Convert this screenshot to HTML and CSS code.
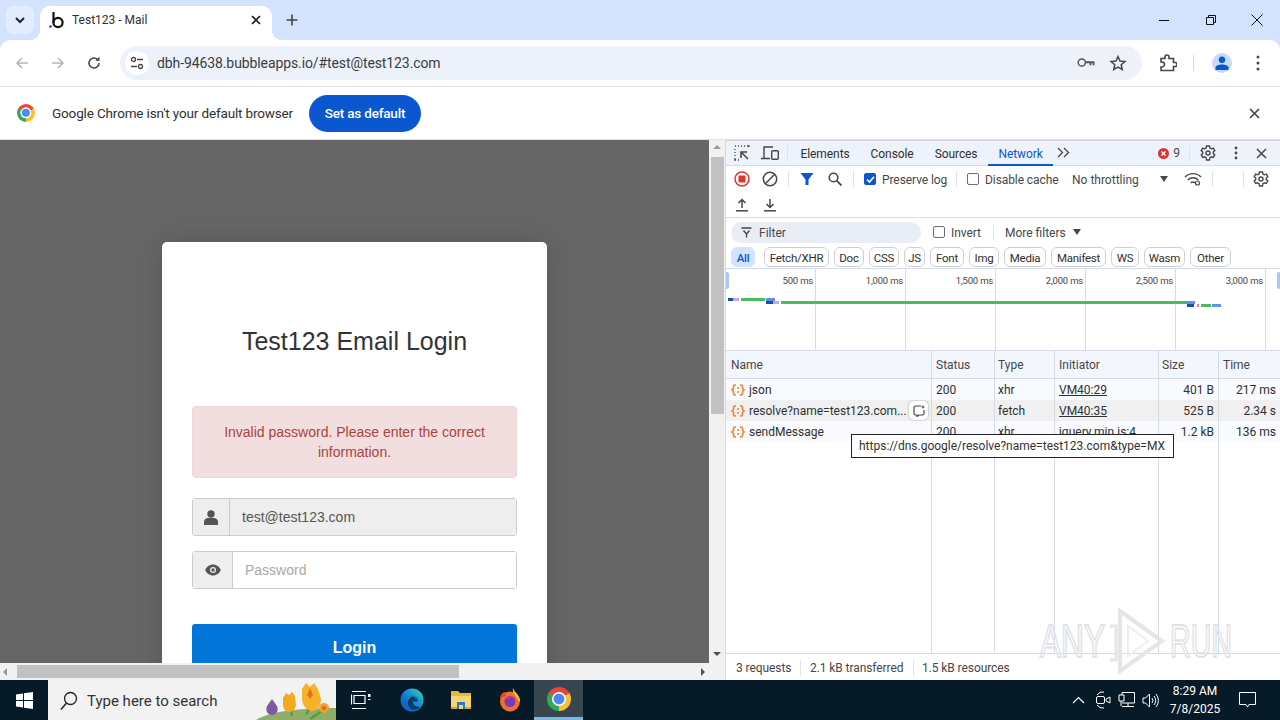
FILE: index.html
```html
<!DOCTYPE html>
<html lang="en">
<head>
    <meta charset="UTF-8">
    <title>Test123 - Mail</title>
    <link rel="stylesheet" href="styles.css">
</head>
<body>
    <!-- tab strip -->
    <div class="tabstrip">
        <div class="tab-search">
            <svg width="12" height="12" viewBox="0 0 12 12"><path d="M2 4l4 4 4-4" fill="none" stroke="#1f1f1f" stroke-width="2"/></svg>
        </div>
        <div class="tab">
            <svg class="favicon" width="18" height="18" viewBox="0 0 18 18">
                <circle cx="2.5" cy="15.5" r="1.3" fill="#3b2bd0"/>
                <path d="M5.5 1v10.5" fill="none" stroke="#111" stroke-width="2.2"/>
                <circle cx="10" cy="11.5" r="4.6" fill="none" stroke="#111" stroke-width="2.2"/>
            </svg>
            <span class="tab-title">Test123 - Mail</span>
            <svg class="tab-close" width="10" height="10" viewBox="0 0 10 10"><path d="M1 1l8 8M9 1l-8 8" stroke="#1f1f1f" stroke-width="1.7"/></svg>
        </div>
        <svg class="new-tab" width="12" height="12" viewBox="0 0 12 12"><path d="M6 .5v11M.5 6h11" stroke="#444" stroke-width="1.6"/></svg>
        <div class="window-controls">
            <svg width="12" height="12" viewBox="0 0 12 12"><path d="M1 6.5h10" stroke="#111" stroke-width="1"/></svg>
            <svg width="12" height="12" viewBox="0 0 12 12"><path d="M1.5 3.5h7v7h-7zM3.5 3.5v-2h7v7h-2" fill="none" stroke="#111" stroke-width="1"/></svg>
            <svg width="12" height="12" viewBox="0 0 12 12"><path d="M.5.5l11 11M11.5.5l-11 11" stroke="#111" stroke-width="1"/></svg>
        </div>
    </div>

    <!-- address bar -->
    <div class="toolbar">
        <svg class="nav-btn" width="16" height="16" viewBox="0 0 16 16"><path d="M14 8H3M8 3L3 8l5 5" fill="none" stroke="#b4b7ba" stroke-width="1.6"/></svg>
        <svg class="nav-btn" width="16" height="16" viewBox="0 0 16 16"><path d="M2 8h11M8 3l5 5-5 5" fill="none" stroke="#b4b7ba" stroke-width="1.6"/></svg>
        <svg class="nav-btn" width="16" height="16" viewBox="0 0 16 16"><path d="M13 8a5 5 0 1 1-1.6-3.7" fill="none" stroke="#474747" stroke-width="1.6"/><path d="M13.5 1.5v4.2H9.300z" fill="#474747"/></svg>
        <div class="omnibox">
            <div class="site-info">
                <svg width="14" height="14" viewBox="0 0 14 14"><circle cx="3.500" cy="3.500" r="2" fill="none" stroke="#474747" stroke-width="1.300"/><path d="M7 3.500h6M1 10.500h6" stroke="#474747" stroke-width="1.300"/><circle cx="10.500" cy="10.500" r="2" fill="none" stroke="#474747" stroke-width="1.300"/></svg>
            </div>
            <span class="url">dbh-94638.bubbleapps.io/#test@test123.com</span>
            <svg class="omni-key" width="18" height="11" viewBox="0 0 18 11"><circle cx="4.800" cy="5.500" r="3.600" fill="none" stroke="#555" stroke-width="1.500"/><path d="M8.500 4.300H17.500v3.900h-1.800V6.300h-1.300v1.900h-1.800V6.300H8.500z" fill="#555"/></svg>
            <svg class="omni-star" width="18" height="18" viewBox="0 0 18 18"><path d="M9 2.500l2 4.500 4.900.5-3.700 3.200 1.100 4.800L9 13l-4.300 2.500 1.100-4.800-3.700-3.200L7 7z" fill="none" stroke="#474747" stroke-width="1.500"/></svg>
        </div>
        <svg class="ext-icon" width="18" height="18" viewBox="0 0 18 18"><path d="M2 4.500h4V3a2 2 0 0 1 4 0v1.500h4.500v4H16a2 2 0 0 1 0 4h-1.500V16.500H2V13h1a2 2 0 0 0 0-5H2z" fill="none" stroke="#474747" stroke-width="1.600"/></svg>
        <div class="toolbar-divider"></div>
        <div class="avatar">
            <svg width="14" height="14" viewBox="0 0 14 14"><circle cx="7" cy="3.800" r="3.200" fill="#0b57d0"/><path d="M.5 14v-2.500C.5 9.500 4 8.500 7 8.500s6.500 1 6.500 3V14z" fill="#0b57d0"/></svg>
        </div>
        <svg class="kebab" width="4" height="16" viewBox="0 0 4 16"><circle cx="2" cy="2" r="1.500" fill="#474747"/><circle cx="2" cy="8" r="1.500" fill="#474747"/><circle cx="2" cy="14" r="1.500" fill="#474747"/></svg>
    </div>

    <!-- default browser bar -->
    <div class="infobar">
        <span class="chrome-logo small"></span>
        <span class="info-text">Google Chrome isn't your default browser</span>
        <button class="set-default">Set as default</button>
        <svg class="info-close" width="11" height="11" viewBox="0 0 11 11"><path d="M1 1l9 9M10 1l-9 9" stroke="#474747" stroke-width="1.700"/></svg>
    </div>

    <div class="content">
        <!-- the page itself -->
        <div class="page-pane">
            <div class="page-row">
                <div class="viewport">
                    <form class="login-card">
                        <h1>Test123 Email Login</h1>
                        <div class="alert">Invalid password. Please enter the correct information.</div>
                        <div class="input-group">
                            <span class="addon addon-user">
                                <svg width="14" height="15" viewBox="0 0 14 15"><circle cx="7" cy="4" r="3.700" fill="#555"/><path d="M0 15v-3c0-2.500 2-4 4-4h6c2 0 4 1.500 4 4v3z" fill="#555"/></svg>
                            </span>
                            <input class="field field-filled" type="text" value="test@test123.com" readonly>
                        </div>
                        <div class="input-group">
                            <span class="addon addon-eye">
                                <svg width="16" height="12" viewBox="0 0 16 12"><path d="M8 .5C4.500.5 1.600 2.800.2 6c1.400 3.200 4.300 5.500 7.800 5.500s6.400-2.300 7.800-5.500C14.400 2.800 11.500.5 8 .5z" fill="#555"/><circle cx="8" cy="6" r="3" fill="#eee"/><circle cx="8" cy="6" r="1.700" fill="#555"/></svg>
                            </span>
                            <input class="field" type="text" placeholder="Password">
                        </div>
                        <button class="login-btn" type="button">Login</button>
                    </form>
                </div>
                <div class="vscroll">
                    <span class="arrow arrow-up"></span>
                    <div class="vthumb"></div>
                    <span class="arrow arrow-down"></span>
                </div>
            </div>
            <div class="hscroll">
                <span class="arrow arrow-left"></span>
                <div class="hthumb"></div>
                <span class="arrow arrow-right"></span>
            </div>
        </div>

        <!-- devtools -->
        <div class="devtools">
            <div class="dt-tabs">
                <svg class="dt-icon" width="16" height="16" viewBox="0 0 16 16"><path d="M1 1h1M4 1h1M7 1h1M10 1h1M13 1h2v1M1 4v1M1 7v1M1 10v1M1 13v2h1M4 15h1" stroke="#474747" stroke-width="1.300" fill="none"/><path d="M14 14L8 8M7 13V7h6" stroke="#474747" stroke-width="1.600" fill="none"/></svg>
                <svg class="dt-icon" width="18" height="16" viewBox="0 0 18 16"><path d="M3 13V2h9M0 13.500h9" stroke="#474747" stroke-width="1.400" fill="none"/><rect x="10.700" y="5.700" width="6.600" height="8.600" rx="1" fill="none" stroke="#474747" stroke-width="1.400"/></svg>
                <div class="dt-divider"></div>
                <span class="dt-tab">Elements</span>
                <span class="dt-tab">Console</span>
                <span class="dt-tab">Sources</span>
                <span class="dt-tab dt-tab-active">Network</span>
                <svg class="dt-more" width="13" height="11" viewBox="0 0 13 11"><path d="M1 1l4.500 4.500L1 10M7 1l4.500 4.500L7 10" fill="none" stroke="#474747" stroke-width="1.300"/></svg>
                <div class="dt-right">
                    <span class="error-dot">
                        <svg width="11" height="11" viewBox="0 0 11 11"><circle cx="5.500" cy="5.500" r="5.500" fill="#dc362e"/><path d="M3.500 3.500l4 4M7.500 3.500l-4 4" stroke="#fff" stroke-width="1.300"/></svg>
                    </span>
                    <span class="error-count">9</span>
                    <div class="dt-divider"></div>
                    <svg class="gear gear-main" width="16" height="16" viewBox="0 0 16 16"><use href="#gear"/></svg>
                    <svg class="dt-kebab" width="4" height="14" viewBox="0 0 4 14"><circle cx="2" cy="2" r="1.400" fill="#474747"/><circle cx="2" cy="7" r="1.400" fill="#474747"/><circle cx="2" cy="12" r="1.400" fill="#474747"/></svg>
                    <svg class="dt-close" width="11" height="11" viewBox="0 0 11 11"><path d="M1 1l9 9M10 1l-9 9" stroke="#474747" stroke-width="1.500"/></svg>
                </div>
            </div>

            <div class="dt-toolbar">
                <svg class="dt-icon icon-record" width="16" height="16" viewBox="0 0 16 16"><circle cx="8" cy="8" r="7" fill="none" stroke="#dc362e" stroke-width="1.500"/><rect x="4.500" y="4.500" width="7" height="7" rx="1" fill="#dc362e"/></svg>
                <svg class="dt-icon icon-clear" width="16" height="16" viewBox="0 0 16 16"><circle cx="8" cy="8" r="6.700" fill="none" stroke="#474747" stroke-width="1.500"/><path d="M3.300 12.700l9.400-9.400" stroke="#474747" stroke-width="1.500"/></svg>
                <div class="dt-divider"></div>
                <svg class="dt-icon icon-filter" width="14" height="14" viewBox="0 0 14 14"><path d="M.5 1h13L8.500 7.500V13h-3V7.500z" fill="#0b57d0"/></svg>
                <svg class="dt-icon icon-search" width="14" height="14" viewBox="0 0 14 14"><circle cx="5.500" cy="5.500" r="4.300" fill="none" stroke="#474747" stroke-width="1.600"/><path d="M8.700 8.700l4.800 4.800" stroke="#474747" stroke-width="1.800"/></svg>
                <div class="dt-divider"></div>
                <label class="check preserve"><span class="box box-on"><svg width="9" height="9" viewBox="0 0 9 9"><path d="M1 4.500l2.500 2.500L8 1.800" fill="none" stroke="#fff" stroke-width="1.600"/></svg></span><span class="label-text">Preserve log</span></label>
                <div class="dt-divider"></div>
                <label class="check disable"><span class="box"></span><span class="label-text">Disable cache</span></label>
                <span class="throttle">No throttling</span>
                <span class="caret"></span>
                <svg class="wifi" width="18" height="14" viewBox="0 0 18 14"><path d="M1 5c4.500-4.500 11.500-4.500 16 0M3.800 8c3-3 7.400-3 10.400 0M6.700 11c1.200-1.200 3-1.200 4.200 0" fill="none" stroke="#474747" stroke-width="1.400"/><circle cx="13.500" cy="11" r="2" fill="#fff" stroke="#474747" stroke-width="1.200"/></svg>
                <div class="dt-divider divider-a"></div>
                <div class="dt-divider divider-b"></div>
                <svg class="gear" width="16" height="16" viewBox="0 0 16 16"><use href="#gear"/></svg>
            </div>

            <div class="dt-toolbar2">
                <svg class="dt-icon" width="14" height="14" viewBox="0 0 14 14"><path d="M7 10V1.500M3.500 5L7 1.500 10.500 5" fill="none" stroke="#474747" stroke-width="1.500"/><path d="M1 12.800h12" stroke="#474747" stroke-width="1.500"/></svg>
                <svg class="dt-icon" width="14" height="14" viewBox="0 0 14 14"><path d="M7 1v8.500M3.500 6L7 9.500 10.500 6" fill="none" stroke="#474747" stroke-width="1.500"/><path d="M1 12.800h12" stroke="#474747" stroke-width="1.500"/></svg>
            </div>

            <div class="filter-row">
                <div class="filter-input">
                    <svg width="11" height="11" viewBox="0 0 11 11"><path d="M.5 1h10M2.500 3.500L5.500 7v3.500M8.500 3.500L5.500 7" fill="none" stroke="#474747" stroke-width="1.400"/></svg>
                    <span>Filter</span>
                </div>
                <label class="check invert"><span class="box"></span><span class="label-text">Invert</span></label>
                <div class="dt-divider"></div>
                <span class="more-filters">More filters</span>
                <span class="caret"></span>
            </div>

            <div class="chips">
                <span class="chip chip-on">All</span>
                <span class="chip">Fetch/XHR</span>
                <span class="chip">Doc</span>
                <span class="chip">CSS</span>
                <span class="chip">JS</span>
                <span class="chip">Font</span>
                <span class="chip">Img</span>
                <span class="chip">Media</span>
                <span class="chip">Manifest</span>
                <span class="chip">WS</span>
                <span class="chip">Wasm</span>
                <span class="chip">Other</span>
            </div>

            <div class="overview">
                <div class="tick">500 ms</div>
                <div class="tick">1,000 ms</div>
                <div class="tick">1,500 ms</div>
                <div class="tick">2,000 ms</div>
                <div class="tick">2,500 ms</div>
                <div class="tick">3,000 ms</div>
                <span class="handle handle-left"></span>
                <span class="handle handle-right"></span>
                <i class="bar dark" style="left:2px;top:29px;width:5px"></i>
                <i class="bar lilac" style="left:7px;top:29px;width:6px"></i>
                <i class="bar green" style="left:15px;top:29px;width:24px"></i>
                <i class="bar blue" style="left:40px;top:29px;width:9px"></i>
                <i class="bar dark" style="left:40px;top:32px;width:7px"></i>
                <i class="bar lilac" style="left:47px;top:32px;width:6px"></i>
                <i class="bar green" style="left:55px;top:32px;width:405px"></i>
                <i class="bar blue" style="left:460px;top:32px;width:9px"></i>
                <i class="bar dark" style="left:461px;top:35px;width:7px"></i>
                <i class="bar pink" style="left:471px;top:35px;width:2px"></i>
                <i class="bar green" style="left:475px;top:35px;width:10px"></i>
                <i class="bar blue" style="left:486px;top:35px;width:9px"></i>
            </div>

            <div class="net-table">
                <div class="col col-name">
                    <div class="cell head">Name</div>
                    <div class="cell"><svg class="req-icon" width="14" height="14" viewBox="0 0 14 14"><use href="#req"/></svg>json</div>
                    <div class="cell row-alt"><svg class="req-icon" width="14" height="14" viewBox="0 0 14 14"><use href="#req"/></svg>resolve?name=test123.com...<span class="rerun"><svg width="12" height="12" viewBox="0 0 12 12"><path d="M8 1H2.500A1.500 1.500 0 0 0 1 2.500v6A1.500 1.500 0 0 0 2.500 10H4v1.500L6 10h3.500A1.500 1.500 0 0 0 11 8.500V5" fill="none" stroke="#474747" stroke-width="1.200"/><path d="M10 .5v3M8.500 2h3" stroke="#474747"/></svg></span></div>
                    <div class="cell"><svg class="req-icon" width="14" height="14" viewBox="0 0 14 14"><use href="#req"/></svg>sendMessage</div>
                </div>
                <div class="col col-status">
                    <div class="cell head">Status</div>
                    <div class="cell">200</div>
                    <div class="cell row-alt">200</div>
                    <div class="cell">200</div>
                </div>
                <div class="col col-type">
                    <div class="cell head">Type</div>
                    <div class="cell">xhr</div>
                    <div class="cell row-alt">fetch</div>
                    <div class="cell">xhr</div>
                </div>
                <div class="col col-init">
                    <div class="cell head">Initiator</div>
                    <div class="cell"><u>VM40:29</u></div>
                    <div class="cell row-alt"><u>VM40:35</u></div>
                    <div class="cell"><u>jquery.min.js:4</u></div>
                </div>
                <div class="col col-size">
                    <div class="cell head">Size</div>
                    <div class="cell num">401 B</div>
                    <div class="cell num row-alt">525 B</div>
                    <div class="cell num">1.2 kB</div>
                </div>
                <div class="col col-time">
                    <div class="cell head">Time</div>
                    <div class="cell num">217 ms</div>
                    <div class="cell num row-alt">2.34 s</div>
                    <div class="cell num">136 ms</div>
                </div>
                <div class="url-tip">https://dns.google/resolve?name=test123.com&amp;type=MX</div>
            </div>

            <div class="dt-status">
                <span class="stat-requests">3 requests</span>
                <div class="dt-divider"></div>
                <span class="stat-transfer">2.1 kB transferred</span>
                <div class="dt-divider"></div>
                <span class="stat-resources">1.5 kB resources</span>
            </div>

            <svg class="watermark" width="200" height="66" viewBox="0 0 200 66">
                <text x="2" y="49" textLength="65" lengthAdjust="spacingAndGlyphs">ANY</text>
                <path d="M72 18h6v34h-6" fill="none" stroke="#e3e5e9" stroke-width="3"/>
                <path d="M82 3l42 30-42 30z" fill="none" stroke="#e3e5e9" stroke-width="4"/>
                <path d="M90 18l20 15-20 15z" fill="none" stroke="#eceef1" stroke-width="2"/>
                <text x="132" y="49" textLength="62" lengthAdjust="spacingAndGlyphs">RUN</text>
            </svg>
        </div>
    </div>

    <!-- windows taskbar -->
    <div class="taskbar">
        <div class="start">
            <svg width="17" height="17" viewBox="0 0 17 17"><path d="M0 2.400l7-1v6.500H0zM8 1.300L17 0v7.900H8zM0 9h7v6.500l-7-1zM8 9h9v8l-9-1.300z" fill="#fff"/></svg>
        </div>
        <div class="search-box">
            <svg width="18" height="20" viewBox="0 0 18 20"><circle cx="10.500" cy="7.500" r="6" fill="none" stroke="#222" stroke-width="1.300"/><path d="M6.500 12L1 18.500" stroke="#222" stroke-width="1.500"/></svg>
            <span>Type here to search</span>
            <svg class="flowers" width="80" height="39" viewBox="0 0 80 39">
                <path d="M0 39c12-8 40-12 80-12v12z" fill="#8fae6a"/>
                <path d="M50 33L59 20M36 35l-3-14M66 30L54 38" stroke="#5d9a3e" stroke-width="2.500" fill="none"/>
                <path d="M16 18l5 7c2 5-1 9-5 9s-7-4-5-9z" fill="#7d5aa8"/>
                <path d="M27 17l3-5 3 2 3-3 3 4 1 9c-1 5-4 7-7 7s-6-3-6-7z" fill="#f2ab1f"/>
                <path d="M46 8l4-6 4 4 4-4 4 6 3 10c0 8-5 12-9 12s-10-5-10-12z" fill="#f6b32a"/>
                <path d="M54 7l3 7-3 4-3-4z" fill="#e96f1a"/>
                <circle cx="68" cy="27" r="5" fill="#f0a030"/>
                <circle cx="68" cy="27" r="2" fill="#d96a1a"/>
            </svg>
        </div>
        <div class="task-icon">
            <svg width="20" height="18" viewBox="0 0 20 18"><path d="M1 .5h14M1 17.500h14M3 4.500h11v8H3zM.5 3.500v10" fill="none" stroke="#fff" stroke-width="1.200"/><path d="M17 3h2.500v3H17z" fill="#fff"/><path d="M17 8.500h2.500" stroke="#fff"/></svg>
        </div>
        <div class="task-icon">
            <svg width="24" height="24" viewBox="0 0 24 24">
                <defs><linearGradient id="edgeG" x1="0" y1="1" x2="1" y2="0"><stop offset="0.250" stop-color="#0c66c2"/><stop offset="0.650" stop-color="#1d9bd8"/><stop offset="1" stop-color="#4fdc8c"/></linearGradient></defs>
                <circle cx="12" cy="12" r="11.500" fill="url(#edgeG)"/>
                <path d="M12 9c4-1 6 1 6 3 0 2-3 2-5 1-1 3 2 6 7 6-3 4-10 4-12-2-1-4 1-7 4-8z" fill="#0b3a6b"/>
                <path d="M18 12c-1-5-8-6-11-2 2-2 7-2 8 1z" fill="#0b7a8e"/>
            </svg>
        </div>
        <div class="task-icon">
            <svg width="22" height="20" viewBox="0 0 22 20"><path d="M1 1h7l2 2h11v15H1z" fill="#e8b73c"/><path d="M1 6h20v13H1z" fill="#f6d673"/><path d="M7 12h8v7h-2v-4H9v4H7z" fill="#2a78c8"/><path d="M1 17h6v2H1zM15 17h6v2h-6z" fill="#c9a845"/></svg>
        </div>
        <div class="task-icon">
            <svg width="22" height="24" viewBox="0 0 22 24">
                <circle cx="11" cy="13.500" r="10" fill="#f2702a"/>
                <path d="M14 0c1 4 6 6 7 12 .3 2-1 2-3-2-2-3-5-6-4-10z" fill="#fcc132"/>
                <path d="M1 10c0-3 3-6 5-6l1 4z" fill="#f2402a"/>
                <circle cx="11" cy="13.500" r="5.500" fill="#7b38b8"/>
                <path d="M6 11c2-3 7-4 10-1-3-1-6 0-7 1z" fill="#c03a8a"/>
            </svg>
        </div>
        <div class="task-icon task-active">
            <span class="chrome-logo big"></span>
        </div>
        <div class="tray">
            <svg class="tray-chevron" width="13" height="8" viewBox="0 0 13 8"><path d="M1 7l5.500-5.500L12 7" fill="none" stroke="#fff" stroke-width="1.200"/></svg>
            <svg width="16" height="18" viewBox="0 0 16 18"><path d="M2 4a7 7 0 0 1 7-3M2 14a7 7 0 0 0 7 3" fill="none" stroke="#fff"/><rect x="1.500" y="5.500" width="8" height="7" rx="1.500" fill="none" stroke="#fff"/><path d="M11 8l4-2v6l-4-2z" fill="none" stroke="#fff"/></svg>
            <svg width="17" height="16" viewBox="0 0 17 16"><path d="M4 3V.5h12.500V11H4M1 3h5v6H1zM10 11v3.500M4 14.500h12M3 9v5" fill="none" stroke="#fff"/></svg>
            <svg width="17" height="15" viewBox="0 0 17 15"><path d="M1 5h2.500L7.500 1v13l-4-4H1z" fill="none" stroke="#fff"/><path d="M10 5a4 4 0 0 1 0 5M12 3a7 7 0 0 1 0 9M14 1a10 10 0 0 1 0 13" fill="none" stroke="#fff"/></svg>
        </div>
        <div class="clock">
            <div>8:29 AM</div>
            <div>7/8/2025</div>
        </div>
        <svg class="notify" width="17" height="16" viewBox="0 0 17 16"><path d="M.5.500h16v12H10l-1.500 2.500L7 12.500H.5z" fill="none" stroke="#fff"/></svg>
    </div>

    <svg width="0" height="0" class="defs">
        <symbol id="gear" viewBox="0 0 16 16">
            <path d="M6.500 1h3l.4 2 1.500.8 1.900-.7 1.500 2.600-1.500 1.300v1.600l1.500 1.300-1.500 2.600-1.900-.7-1.500.8-.4 2.400h-3l-.4-2.400-1.500-.8-1.900.7-1.500-2.600 1.500-1.300V7L1.200 5.700l1.500-2.600 1.900.7 1.500-.8z" fill="none" stroke="#474747" stroke-width="1.400"/>
            <circle cx="8" cy="8" r="2" fill="none" stroke="#474747" stroke-width="1.400"/>
        </symbol>
        <symbol id="req" viewBox="0 0 14 14">
            <path d="M5 2H4a1.500 1.500 0 0 0-1.500 1.500V5.500L1 7l1.500 1.500V10.500A1.500 1.500 0 0 0 4 12h1M9 2h1a1.500 1.500 0 0 1 1.500 1.500V5.500L13 7l-1.500 1.500V10.500A1.500 1.500 0 0 1 10 12H9" fill="none" stroke="#e8833a" stroke-width="1.600"/>
            <circle cx="7" cy="5" r="1" fill="#e8833a"/>
            <circle cx="7" cy="9" r="1" fill="#e8833a"/>
        </symbol>
    </svg>
</body>
</html>
```

FILE: styles.css
```css
* {
    margin: 0;
    padding: 0;
    box-sizing: border-box;
}

html, body {
    width: 1280px;
    height: 720px;
    overflow: hidden;
}

body {
    display: flex;
    flex-direction: column;
    background: #d3e3fd;
    color: #1f1f1f;
    font-family: Roboto, 'Open Sans', sans-serif;
    font-size: 12px;
}

svg {
    flex: none;
    display: block;
}

.defs {
    position: absolute;
}

/* tab strip */
.tabstrip {
    height: 40px;
    flex: none;
    display: flex;
    align-items: flex-end;
    background: #d3e3fd;
    position: relative;
}

.tab-search {
    width: 28px;
    height: 28px;
    margin: 0 6px 6px 6px;
    border-radius: 8px;
    background: #e2ecfc;
    display: flex;
    align-items: center;
    justify-content: center;
}

.tab {
    width: 232px;
    height: 34px;
    background: #fff;
    border-radius: 10px 10px 0 0;
    display: flex;
    align-items: center;
    padding: 0 11px 6px 8px;
    position: relative;
}

.tab::before,
.tab::after {
    content: "";
    position: absolute;
    bottom: 0;
    width: 10px;
    height: 10px;
}

.tab::before {
    left: -10px;
    background: radial-gradient(circle at 0 0, transparent 10px, #fff 10px);
}

.tab::after {
    right: -10px;
    background: radial-gradient(circle at 100% 0, transparent 10px, #fff 10px);
}

.favicon {
    margin-right: 6px;
}

.tab-title {
    flex: 1;
    font-size: 12px;
    color: #303030;
}

.new-tab {
    margin: 0 0 14px 14px;
}

.window-controls {
    margin-left: auto;
    margin-bottom: 14px;
    width: 122px;
    padding-right: 17px;
    display: flex;
    justify-content: space-between;
}

/* address bar */
.toolbar {
    height: 47px;
    flex: none;
    display: flex;
    align-items: center;
    padding: 0 20px 1px 14px;
    background: #fff;
    border-bottom: 1px solid #e1e3e6;
    border-radius: 10px 10px 0 0;
}

.nav-btn {
    margin-right: 20px;
}

.nav-btn:nth-child(3) {
    margin-right: 18px;
}

.omnibox {
    width: 1022px;
    height: 34px;
    border-radius: 17px;
    background: #edf2fa;
    display: flex;
    align-items: center;
    padding: 0 15px 0 5px;
}

.site-info {
    width: 24px;
    height: 24px;
    border-radius: 50%;
    background: #fff;
    display: flex;
    align-items: center;
    justify-content: center;
    margin-right: 8px;
}

.url {
    flex: 1;
    font-size: 14px;
    letter-spacing: -0.1px;
    color: #3c3c3c;
}

.omni-key {
    margin-right: 14px;
}

.ext-icon {
    margin-left: 17px;
}

.toolbar-divider {
    width: 1px;
    height: 16px;
    background: #d5d8dc;
    margin: 0 18px 0 16px;
}

.avatar {
    width: 20px;
    height: 20px;
    border-radius: 50%;
    background: #c7dafa;
    display: flex;
    align-items: center;
    justify-content: center;
}

.kebab {
    margin-left: auto;
}

/* default browser bar */
.infobar {
    height: 53px;
    flex: none;
    display: flex;
    align-items: center;
    padding: 0 20px 0 17px;
    background: #fff;
    border-bottom: 1px solid #dfe1e4;
}

.chrome-logo {
    display: block;
    position: relative;
    border-radius: 50%;
    background: conic-gradient(from -60deg, #e8453c 0 120deg, #fbc02d 120deg 240deg, #34a853 240deg 360deg);
}

.chrome-logo::after {
    content: "";
    position: absolute;
    top: 50%;
    left: 50%;
    width: 46%;
    height: 46%;
    transform: translate(-50%, -50%);
    border-radius: 50%;
    background: #4c8bf5;
    box-shadow: 0 0 0 1.500px #fff;
}

.chrome-logo.small {
    width: 18px;
    height: 18px;
}

.chrome-logo.big {
    width: 24px;
    height: 24px;
}

.info-text {
    margin-left: 17px;
    width: 241px;
    white-space: nowrap;
    font-size: 13.500px;
    letter-spacing: -0.150px;
    color: #303030;
}

.set-default {
    margin-left: 16px;
    width: 112px;
    height: 37px;
    border: none;
    border-radius: 19px;
    background: #0b57d0;
    color: #fff;
    font-family: inherit;
    font-size: 13.500px;
    font-weight: 500;
    letter-spacing: -0.200px;
}

.info-close {
    margin-left: auto;
}

/* page area */
.content {
    flex: 1;
    min-height: 0;
    display: flex;
}

.page-pane {
    width: 725px;
    flex: none;
    display: flex;
    flex-direction: column;
}

.page-row {
    flex: 1;
    min-height: 0;
    display: flex;
}

.viewport {
    flex: 1;
    overflow: hidden;
    background: #666;
    font-family: 'Liberation Sans', Arial, sans-serif;
    padding-top: 102px;
}

.login-card {
    width: 385px;
    height: 460px;
    margin: 0 auto;
    padding: 0 30px;
    background: #fff;
    border-radius: 5px;
    box-shadow: 0 0 30px rgba(0, 0, 0, 0.15);
}

.login-card h1 {
    padding-top: 84px;
    height: 164px;
    font-size: 25px;
    font-weight: 400;
    line-height: 30px;
    text-align: center;
    color: #333;
}

.alert {
    height: 72px;
    padding: 15px 20px;
    margin-bottom: 20px;
    border: 1px solid #ebd8db;
    border-radius: 4px;
    background: #f2dede;
    color: #a94442;
    font-size: 14px;
    line-height: 20px;
    text-align: center;
}

.input-group {
    height: 38px;
    display: flex;
    margin-bottom: 15px;
    border: 1px solid #ccc;
    border-radius: 3px;
}

.addon {
    flex: none;
    display: flex;
    align-items: center;
    justify-content: center;
    background: #eee;
    border-right: 1px solid #ccc;
}

.addon-user {
    width: 37px;
}

.addon-eye {
    width: 40px;
}

.field {
    flex: 1;
    min-width: 0;
    border: none;
    outline: none;
    padding: 0 12px;
    font-family: inherit;
    font-size: 14px;
    color: #555;
    background: #fff;
}

.field::placeholder {
    color: #aaa;
}

.field-filled {
    background: #eee;
}

.login-btn {
    display: block;
    width: 100%;
    height: 46px;
    margin-top: 35px;
    padding-top: 2px;
    border: none;
    border-radius: 3px;
    background: #0275d8;
    color: #fff;
    font-family: inherit;
    font-size: 16px;
    font-weight: 700;
}

/* scrollbars */
.vscroll {
    width: 16px;
    flex: none;
    background: #f1f1f1;
    display: flex;
    flex-direction: column;
    align-items: center;
    padding-top: 5px;
}

.vthumb {
    width: 13px;
    height: 257px;
    margin-top: 8px;
    background: #c1c1c1;
}

.hscroll {
    height: 17px;
    flex: none;
    background: #f1f1f1;
    display: flex;
    align-items: center;
    padding: 0 20px 0 3px;
}

.hthumb {
    width: 442px;
    height: 13px;
    margin-left: 10px;
    background: #c1c1c1;
}

.arrow {
    display: block;
    width: 0;
    height: 0;
    border: 4px solid transparent;
    flex: none;
}

.arrow-up {
    border-bottom-color: #9a9a9a;
    border-top-width: 0;
}

.arrow-down {
    margin-top: auto;
    margin-bottom: 7px;
    border-top-color: #505050;
    border-bottom-width: 0;
}

.arrow-left {
    border-right-color: #9a9a9a;
    border-left-width: 0;
}

.arrow-right {
    margin-left: auto;
    border-left-color: #505050;
    border-right-width: 0;
}

/* devtools */
.devtools {
    flex: 1;
    min-width: 0;
    display: flex;
    flex-direction: column;
    position: relative;
    background: #fff;
    border-left: 1px solid #d5dbe6;
    color: #474747;
}

.dt-divider {
    width: 1px;
    height: 16px;
    flex: none;
    background: #dde1e8;
}

.dt-tabs {
    height: 26px;
    flex: none;
    display: flex;
    align-items: center;
    padding-left: 8px;
    background: #eef3fb;
    border-top: 1px solid #cfd3d9;
    border-bottom: 1px solid #d5dbe6;
}

.dt-tabs .dt-icon {
    margin-right: 11px;
}

.dt-tabs > .dt-divider {
    margin-left: -3px;
    margin-right: 2px;
}

.dt-tab {
    height: 25px;
    display: flex;
    align-items: center;
    padding: 1px 10.500px 0;
    font-size: 12px;
    letter-spacing: -0.080px;
    color: #303030;
}

.dt-tab-active {
    color: #0b57d0;
    border-bottom: 2px solid #0b57d0;
    padding-top: 3px;
}

.dt-more {
    margin-left: 4px;
    margin-bottom: 2px;
}

.dt-right {
    margin-left: auto;
    display: flex;
    align-items: center;
    padding-right: 13px;
}

.error-count {
    margin-left: 4px;
    margin-right: 9px;
    color: #474747;
}

.gear-main {
    margin-left: 10px;
}

.dt-kebab {
    margin-left: 18px;
}

.dt-close {
    margin-left: 18px;
}

.dt-toolbar {
    height: 26px;
    flex: none;
    display: flex;
    align-items: center;
    padding-left: 8px;
    background: #fff;
}

.icon-record {
    margin-right: 12px;
}

.icon-clear {
    margin-right: 10px;
}

.icon-filter {
    margin-left: 1px;
    margin-right: 14px;
}

.icon-search {
    margin-right: 11px;
}

.dt-toolbar .dt-divider {
    margin-right: 10px;
}

.check {
    display: flex;
    align-items: center;
    font-size: 12px;
}

.label-text {
    padding-top: 2px;
    letter-spacing: -0.080px;
}

.box {
    width: 12px;
    height: 12px;
    margin-right: 6px;
    border: 1px solid #6b6f75;
    border-radius: 2px;
    display: flex;
    align-items: center;
    justify-content: center;
}

.box-on {
    background: #0b57d0;
    border-color: #0b57d0;
}

.preserve {
    width: 92px;
}

.disable {
    width: 105px;
}

.throttle {
    width: 88px;
    padding-top: 2px;
    font-size: 12px;
}

.caret {
    width: 0;
    height: 0;
    border-left: 4px solid transparent;
    border-right: 4px solid transparent;
    border-top: 6px solid #474747;
}

.wifi {
    margin-left: 16px;
    margin-right: 10px;
}

.dt-toolbar .divider-a {
    margin-right: 30px;
}

.dt-toolbar .divider-b {
    margin-right: 9px;
}

.dt-toolbar2 {
    height: 26px;
    flex: none;
    display: flex;
    align-items: center;
    padding-left: 9px;
    border-bottom: 1px solid #dadce0;
    background: #fff;
}

.dt-toolbar2 .dt-icon {
    margin-right: 14px;
}

.filter-row {
    height: 27px;
    flex: none;
    display: flex;
    align-items: center;
    padding: 1px 0 0 5px;
    font-size: 12px;
}

.filter-input {
    width: 190px;
    height: 21px;
    border-radius: 11px;
    background: #e9eef6;
    display: flex;
    align-items: center;
    padding-left: 10px;
}

.filter-input span {
    margin-left: 7px;
    padding-top: 1px;
}

.invert {
    margin-left: 12px;
    width: 60px;
}

.more-filters {
    margin-left: 11px;
    width: 68px;
    padding-top: 1px;
}

.chips {
    height: 24px;
    flex: none;
    display: grid;
    grid-template-columns: 28px 65px 30px 30px 21px 34px 30px 42px 55px 28px 41px 41px;
    column-gap: 5px;
    padding: 2px 0 0 5px;
    border-bottom: 1px solid #d5dbe6;
}

.chip {
    height: 20px;
    padding-top: 1px;
    display: flex;
    align-items: center;
    justify-content: center;
    border: 1px solid #cdd0d4;
    border-radius: 6px;
    font-size: 11.500px;
    letter-spacing: -0.250px;
    color: #303030;
    white-space: nowrap;
}

.chip-on {
    margin-right: 4px;
    border-color: #d3e3fd;
    background: #d3e3fd;
    font-weight: 500;
    color: #0b57d0;
}

.overview {
    height: 82px;
    flex: none;
    display: grid;
    grid-template-columns: repeat(6, 90px);
    position: relative;
    border-bottom: 1px solid #d5dbe6;
    overflow: hidden;
}

.tick {
    border-right: 1px solid #d5dbe6;
    text-align: right;
    padding: 6px 2px 0 0;
    font-size: 9.500px;
    letter-spacing: -0.200px;
    color: #474747;
}

.handle {
    position: absolute;
    top: 3px;
    width: 4px;
    height: 17px;
    background: #a8c7fa;
    border-radius: 2px;
}

.handle-left {
    left: -1px;
}

.handle-right {
    right: -1px;
}

.bar {
    position: absolute;
    height: 3px;
}

.dark { background: #174ea6; }
.lilac { background: #c6a7ee; }
.green { background: #4cba5e; }
.blue { background: #5a94e8; }
.pink { background: #e77ad8; }

.net-table {
    flex: 1;
    min-height: 0;
    display: flex;
    position: relative;
    border-bottom: 1px solid #d5dbe6;
}

.col {
    flex: none;
    border-right: 1px solid #d5dbe6;
}

.col-name { width: 206px; }
.col-status { width: 63px; }
.col-type { width: 60px; }
.col-init { width: 104px; }
.col-size { width: 60px; }
.col-time { flex: 1; border-right: none; }

.col-name .head {
    padding-left: 5px;
}

.col-type .cell,
.col-size .head {
    padding-left: 3px;
}

.cell {
    height: 21px;
    display: flex;
    align-items: center;
    padding: 0 4px;
    font-size: 12px;
    color: #303030;
    background: #f8fafd;
    white-space: nowrap;
    overflow: hidden;
    position: relative;
}

.head {
    height: 28px;
    background: #f3f6fc;
    border-bottom: 1px solid #d5dbe6;
    color: #474747;
}

.row-alt {
    background: #f0f0f0;
}

.num {
    justify-content: flex-end;
}

.req-icon {
    margin: 0 4px 0 1px;
}

.rerun {
    position: absolute;
    right: 3px;
    top: 1px;
    width: 19px;
    height: 19px;
    background: #fff;
    border-radius: 5px;
    box-shadow: 0 0 2px rgba(0, 0, 0, 0.4);
    display: flex;
    align-items: center;
    justify-content: center;
}

.url-tip {
    position: absolute;
    left: 125px;
    top: 83px;
    width: 323px;
    height: 24px;
    padding-left: 7px;
    display: flex;
    align-items: center;
    background: #fff;
    border: 1px solid #222;
    font-size: 12px;
    color: #333;
    white-space: nowrap;
}

.dt-status {
    height: 26px;
    flex: none;
    display: flex;
    align-items: center;
    padding: 1px 0 0 10px;
    font-size: 12px;
    letter-spacing: -0.080px;
    background: #fff;
}

.stat-requests { width: 64px; }
.stat-transfer { width: 103px; margin-left: 9px; }
.stat-resources { margin-left: 8px; }

.watermark {
    position: absolute;
    left: 312px;
    top: 468px;
    overflow: visible;
    font-family: 'Liberation Sans', sans-serif;
    font-size: 47px;
    fill: none;
    stroke: #dfe2e7;
    stroke-width: 2px;
}

/* taskbar */
.taskbar {
    height: 40px;
    flex: none;
    display: flex;
    align-items: center;
    background: #071a28;
    color: #fff;
    position: relative;
}

.start {
    width: 48px;
    display: flex;
    justify-content: center;
}

.search-box {
    width: 288px;
    height: 40px;
    display: flex;
    align-items: center;
    padding: 2px 0 0 12px;
    background: #f2f2f2;
    color: #333;
    font-size: 15px;
    position: relative;
    overflow: hidden;
}

.search-box span {
    margin-left: 9px;
}

.flowers {
    position: absolute;
    right: 0;
    bottom: 0;
}

.task-icon {
    width: 49px;
    height: 40px;
    display: flex;
    align-items: center;
    justify-content: center;
}

.task-icon:nth-child(3) {
    margin-right: 2px;
}

.task-active {
    background: #38474f;
    border-bottom: 3px solid #76b9ed;
}

.tray {
    margin-left: auto;
    display: flex;
    align-items: center;
    gap: 7px;
}

.tray-chevron {
    margin-right: 3px;
}

.clock {
    width: 72px;
    text-align: center;
    font-size: 12px;
    line-height: 18px;
}

.notify {
    margin: 0 24px 0 8px;
}
```
